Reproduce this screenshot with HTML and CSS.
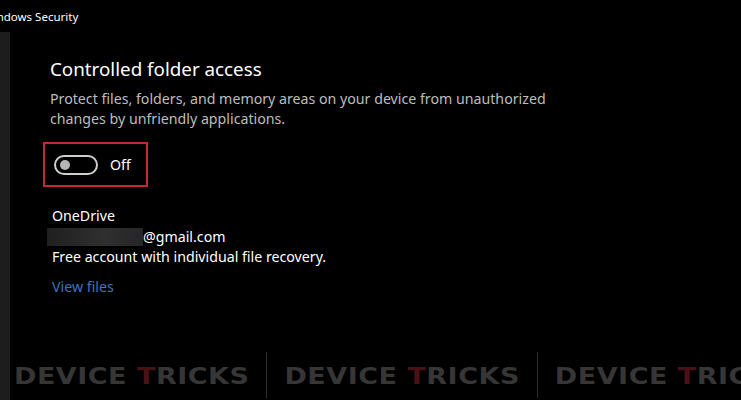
FILE: index.html
```html
<!DOCTYPE html>
<html lang="en">
<head>
  <meta charset="UTF-8" />
  <meta name="viewport" content="width=device-width, initial-scale=1.0"/>
  <title>Windows Security</title>
  <link rel="stylesheet" href="styles.css">
</head>
<body>

  <div class="titlebar"><span class="app-name">Windows Security</span></div>

  <div class="window">
    <div class="nav-strip"></div>

    <div class="page">
      <h1>Controlled folder access</h1>
      <p class="desc">Protect files, folders, and memory areas on your device from unauthorized changes by unfriendly applications.</p>

      <div class="highlight">
        <div class="toggle"><span class="knob"></span></div>
        <span class="toggle-label">Off</span>
      </div>

      <div class="account">
        <div class="account-name">OneDrive</div>
        <div class="email"><span class="blur"></span>@gmail.com</div>
        <div>Free account with individual file recovery.</div>
        <a href="#" class="link">View files</a>
      </div>
    </div>
  </div>

  <div class="watermark">
    <span class="mark">DEVICE <b>T</b>RICKS</span>
    <span class="sep"></span>
    <span class="mark">DEVICE <b>T</b>RICKS</span>
    <span class="sep"></span>
    <span class="mark">DEVICE <b>T</b>RICKS</span>
  </div>

</body>
</html>
```

FILE: styles.css
```css
body {
  margin: 0;
  background: #000;
  color: #fff;
  font-family: 'Noto Sans', 'Open Sans', sans-serif;
  width: 741px;
  height: 400px;
  overflow: hidden;
  position: relative;
}

.titlebar {
  height: 32px;
  display: flex;
  align-items: center;
  font-size: 11.5px;
  overflow: hidden;
}

.app-name {
  margin-left: -17px;
  white-space: nowrap;
}

.window {
  display: flex;
  height: 368px;
}

.nav-strip {
  width: 10px;
  background: #1d1d1d;
}

.page {
  padding-left: 40px;
}

h1 {
  font-size: 18.8px;
  font-weight: normal;
  margin: 23px 0 0;
  line-height: 28px;
}

.desc {
  color: #bdbdbd;
  font-size: 14.2px;
  line-height: 20px;
  margin: 6px 0 0;
  width: 520px;
}

.highlight {
  margin: 13px 0 0 -7px;
  width: 101px;
  height: 41px;
  border: 2px solid #c02a35;
  display: flex;
  align-items: center;
  box-sizing: content-box;
}

.toggle {
  margin-left: 9px;
  width: 40px;
  height: 16px;
  border: 2px solid #cfcfcf;
  border-radius: 11px;
  display: flex;
  align-items: center;
}

.knob {
  width: 10px;
  height: 10px;
  border-radius: 50%;
  background: #b5b5b5;
  margin-left: 4px;
}

.toggle-label {
  margin-left: 12px;
  font-size: 14.2px;
}

.account {
  margin-top: 19px;
  margin-left: 2px;
  font-size: 14.2px;
  line-height: 20.5px;
}

.email {
  display: flex;
  align-items: center;
}

.blur {
  width: 96px;
  height: 18px;
  margin-left: -5px;
  background: linear-gradient(90deg, #202020, #2f2f2f 60%, #262626);
}

.link {
  display: inline-block;
  margin-top: 9px;
  color: #3f74bd;
  text-decoration: none;
}

.watermark {
  position: absolute;
  left: 14px;
  top: 352px;
  display: flex;
  align-items: center;
  gap: 17px;
  white-space: nowrap;
}

.mark {
  font-family: 'DejaVu Sans', sans-serif;
  font-size: 27px;
  font-weight: bold;
  color: #363636;
  letter-spacing: 0.5px;
  transform: scaleY(0.85);
}

.mark b {
  color: #4a1216;
}

.sep {
  width: 1px;
  height: 46px;
  background: #2e2e2e;
}
```
